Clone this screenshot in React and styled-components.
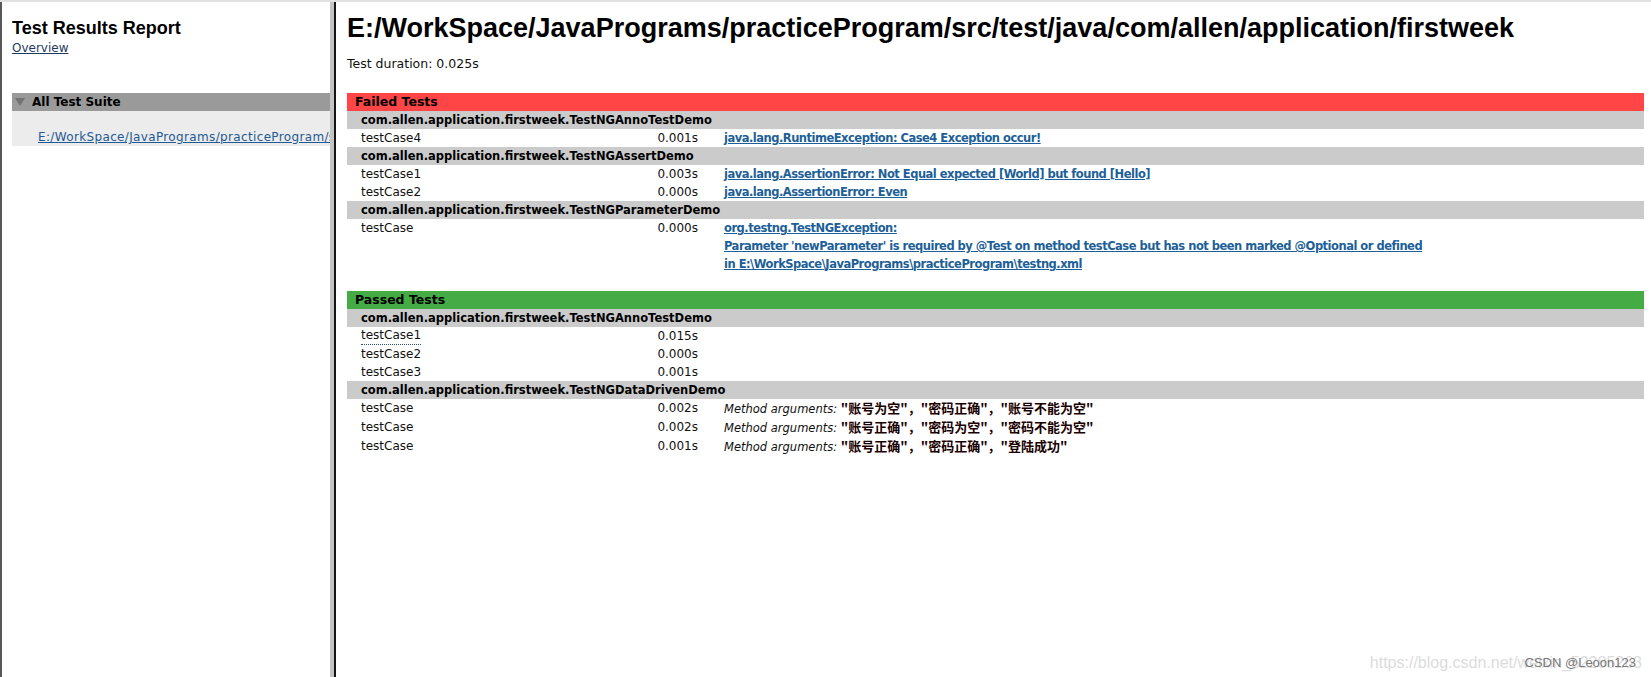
import styled, { createGlobalStyle } from "styled-components";

const GlobalStyle = createGlobalStyle`
    html, body {
        margin: 0;
        padding: 0;
        background: #fff;
    }
    body {
        font-family: "DejaVu Sans", "Noto Sans CJK SC", sans-serif;
        font-size: 12px;
        color: #111;
    }
`;

const FrameStyled = styled.div`
    display: flex;
    height: 100vh;
    box-sizing: border-box;
    border-top: 2px solid #e2e2e2;
    position: relative;
    overflow: hidden;
`;

const SidebarStyled = styled.div`
    width: 330px;
    flex-shrink: 0;
    box-sizing: border-box;
    border-left: 2px solid #585858;
    padding-left: 10px;
    overflow: hidden;
    .sidebar {
        &__title {
            margin: 15px 0 0;
            font-family: "Liberation Sans", Arial, sans-serif;
            font-size: 18px;
            line-height: 22px;
            font-weight: bold;
            color: #000;
        }
        &__overview {
            display: inline-block;
            margin-top: 2px;
            line-height: 14px;
            color: #1f3a62;
            text-decoration: underline;
        }
    }
`;

const SuiteStyled = styled.div`
    margin-top: 38px;
    width: 340px;
`;

const SuiteBar = styled.div`
    display: flex;
    align-items: center;
    height: 18px;
    background: #9a9a9a;
    font-weight: bold;
    font-size: 12px;
    color: #000;
    padding-left: 3px;
    gap: 7px;
`;

const Caret = styled.span`
    width: 0;
    height: 0;
    border-left: 5px solid transparent;
    border-right: 5px solid transparent;
    border-top: 8px solid #747474;
`;

const SuiteBody = styled.div`
    background: #ececec;
    height: 35px;
    box-sizing: border-box;
    padding: 19px 0 0 26px;
    white-space: nowrap;
    a {
        color: #1f5a94;
        line-height: 14px;
        letter-spacing: 0.35px;
        text-decoration: underline;
    }
`;

const Splitter = styled.div`
    width: 4px;
    flex-shrink: 0;
    background: #c4c4c4;
    border-right: 2px solid #151515;
`;

const MainStyled = styled.div`
    flex: 1;
    min-width: 0;
    padding: 0 7px 0 11px;
    .main {
        &__title {
            margin: 10px 0 0;
            font-family: "Liberation Sans", Arial, sans-serif;
            font-size: 27px;
            line-height: 32px;
            font-weight: bold;
            color: #000;
            white-space: nowrap;
        }
        &__duration {
            margin: 12px 0 0;
            font-size: 12.5px;
            line-height: 16px;
            color: #111;
        }
    }
`;

const Section = styled.div`
    margin-top: ${(p) => p.$gap}px;
`;

const SectionBar = styled.div`
    height: 18px;
    line-height: 18px;
    padding-left: 8px;
    background: ${(p) => (p.$tone === "fail" ? "#ff4545" : "#45ab45")};
    font-weight: bold;
    font-size: 12.5px;
    color: #000;
`;

const ClassRow = styled.div`
    height: 18px;
    line-height: 18px;
    padding-left: 14px;
    background: #cbcbcb;
    font-weight: bold;
    font-size: 11.5px;
    color: #000;
`;

const TestRow = styled.div`
    display: grid;
    grid-template-columns: 280px 57px 1fr;
    padding-left: 14px;
    line-height: 18px;
    min-height: 18px;
`;

const TestName = styled.span`
    justify-self: start;
    line-height: ${(p) => (p.$focused ? "17px" : "18px")};
    height: 18px;
    box-sizing: border-box;
    border-bottom: ${(p) => (p.$focused ? "1px dotted #2a4a7a" : "none")};
`;

const Duration = styled.span`
    text-align: right;
`;

const Message = styled.div`
    padding-left: 26px;
    white-space: nowrap;
`;

const ErrorLink = styled.a`
    font-weight: bold;
    font-size: 11.5px;
    letter-spacing: -0.5px;
    color: #1d5f98;
    text-decoration: underline;
`;

const ArgsLabel = styled.span`
    font-style: italic;
    font-size: 11.5px;
    color: #111;
`;

const ArgsValue = styled.span`
    font-family: "Noto Sans CJK SC", "DejaVu Sans", sans-serif;
    font-weight: bold;
    font-size: 13px;
    color: #1a0000;
`;

const Watermark = styled.div`
    position: absolute;
    right: 9px;
    bottom: 5px;
    font-family: "Liberation Sans", Arial, sans-serif;
    .mark {
        &__url {
            font-size: 16px;
            color: #dcdcdc;
        }
        &__author {
            position: absolute;
            right: 6px;
            top: 1px;
            font-size: 13px;
            color: #777;
        }
    }
`;

const failed = [
    {
        className: "com.allen.application.firstweek.TestNGAnnoTestDemo",
        tests: [{ name: "testCase4", time: "0.001s", error: ["java.lang.RuntimeException: Case4 Exception occur!"] }],
    },
    {
        className: "com.allen.application.firstweek.TestNGAssertDemo",
        tests: [
            { name: "testCase1", time: "0.003s", error: ["java.lang.AssertionError: Not Equal expected [World] but found [Hello]"] },
            { name: "testCase2", time: "0.000s", error: ["java.lang.AssertionError: Even"] },
        ],
    },
    {
        className: "com.allen.application.firstweek.TestNGParameterDemo",
        tests: [
            {
                name: "testCase",
                time: "0.000s",
                error: [
                    "org.testng.TestNGException:",
                    "Parameter 'newParameter' is required by @Test on method testCase but has not been marked @Optional or defined",
                    "in E:\\WorkSpace\\JavaPrograms\\practiceProgram\\testng.xml",
                ],
            },
        ],
    },
];

const passed = [
    {
        className: "com.allen.application.firstweek.TestNGAnnoTestDemo",
        tests: [
            { name: "testCase1", time: "0.015s", focused: true },
            { name: "testCase2", time: "0.000s" },
            { name: "testCase3", time: "0.001s" },
        ],
    },
    {
        className: "com.allen.application.firstweek.TestNGDataDrivenDemo",
        tests: [
            { name: "testCase", time: "0.002s", args: "\"账号为空\"，\"密码正确\"，\"账号不能为空\"" },
            { name: "testCase", time: "0.002s", args: "\"账号正确\"，\"密码为空\"，\"密码不能为空\"" },
            { name: "testCase", time: "0.001s", args: "\"账号正确\"，\"密码正确\"，\"登陆成功\"" },
        ],
    },
];

function ResultGroup({ group }) {
    return (
        <>
            <ClassRow>{group.className}</ClassRow>
            {group.tests.map((test, i) => (
                <TestRow key={i}>
                    <TestName $focused={test.focused}>{test.name}</TestName>
                    <Duration>{test.time}</Duration>
                    <Message>
                        {test.error && (
                            <ErrorLink href="#">
                                {test.error.map((line, j) => (
                                    <span key={j}>
                                        {j > 0 && <br />}
                                        {line}
                                    </span>
                                ))}
                            </ErrorLink>
                        )}
                        {test.args && (
                            <>
                                <ArgsLabel>Method arguments: </ArgsLabel>
                                <ArgsValue>{test.args}</ArgsValue>
                            </>
                        )}
                    </Message>
                </TestRow>
            ))}
        </>
    );
}

function App() {
    return (
        <FrameStyled>
            <GlobalStyle />
            <SidebarStyled>
                <h1 className="sidebar__title">Test Results Report</h1>
                <a className="sidebar__overview" href="#">
                    Overview
                </a>
                <SuiteStyled>
                    <SuiteBar>
                        <Caret />
                        All Test Suite
                    </SuiteBar>
                    <SuiteBody>
                        <a href="#">E:/WorkSpace/JavaPrograms/practiceProgram/src/test/java/com/allen/application/firstweek</a>
                    </SuiteBody>
                </SuiteStyled>
            </SidebarStyled>
            <Splitter />
            <MainStyled>
                <h2 className="main__title">E:/WorkSpace/JavaPrograms/practiceProgram/src/test/java/com/allen/application/firstweek</h2>
                <p className="main__duration">Test duration: 0.025s</p>
                <Section $gap={21}>
                    <SectionBar $tone="fail">Failed Tests</SectionBar>
                    {failed.map((group, i) => (
                        <ResultGroup key={i} group={group} />
                    ))}
                </Section>
                <Section $gap={18}>
                    <SectionBar $tone="pass">Passed Tests</SectionBar>
                    {passed.map((group, i) => (
                        <ResultGroup key={i} group={group} />
                    ))}
                </Section>
            </MainStyled>
            <Watermark>
                <span className="mark__url">https://blog.csdn.net/weixin_52285263</span>
                <span className="mark__author">CSDN @Leoon123</span>
            </Watermark>
        </FrameStyled>
    );
}

export default App;
